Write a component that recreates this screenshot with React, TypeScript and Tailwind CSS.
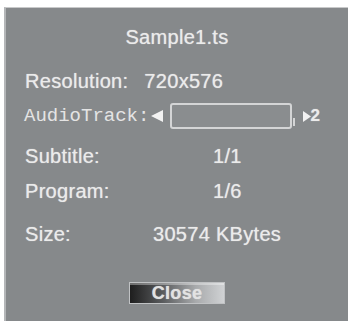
import React from "react";

export default function App() {
  return (
    <div className="w-[348px] h-[321px] bg-white overflow-hidden">
      <div className="ml-[4px] mt-[7px] w-[344px] h-[314px] bg-[#86898b] border-l-2 border-t border-l-[#b4b6b8] border-t-[#c8c9ca] flex flex-col text-[#ebebeb] [font-family:'Liberation_Sans',Arial,sans-serif] text-[20px] leading-[24px] tracking-[0.3px] [text-shadow:0_0_1px_rgba(240,240,240,0.7)]">
        <div className="mt-[17px] h-[24px] text-center">Sample1.ts</div>
        <div className="mt-[20px] h-[24px] pl-[19px] flex">
          <span>Resolution:</span>
          <span className="ml-[16px]">720x576</span>
        </div>
        <div className="mt-[10px] h-[26px] pl-[18px] flex items-center">
          <span className="[font-family:'Liberation_Mono',monospace] text-[19px] leading-[26px] tracking-normal text-[#e4e4e4] [text-shadow:none]">AudioTrack:</span>
          <svg width="14" height="14" viewBox="0 0 14 14" className="ml-[1px]">
            <polygon points="1,7 13,1 13,13" fill="#f2f2f2" />
          </svg>
          <div className="ml-[6px] w-[122px] h-[26px] rounded-[3px] border-2 border-[#d4d5d6] bg-[#8a8d8f]" />
          <div className="ml-[1px] mt-[12px] w-[2px] h-[8px] bg-[#d4d5d6]" />
          <svg width="10" height="13" viewBox="0 0 10 13" className="ml-[7px]">
            <polygon points="1,1 9,6.5 1,12" fill="#f2f2f2" />
          </svg>
          <span className="text-[17px] leading-[20px] font-bold -ml-[2px]">2</span>
        </div>
        <div className="mt-[15px] h-[24px] pl-[19px] flex">
          <span className="w-[188px]">Subtitle:</span>
          <span>1/1</span>
        </div>
        <div className="mt-[11px] h-[24px] pl-[19px] flex">
          <span className="w-[188px]">Program:</span>
          <span>1/6</span>
        </div>
        <div className="mt-[19px] h-[24px] pl-[19px] flex">
          <span className="w-[128px]">Size:</span>
          <span>30574 KBytes</span>
        </div>
        <div className="mt-[36px] flex justify-center">
          <div className="w-[96px] h-[22px] border border-[#c0c2c4] bg-[linear-gradient(to_right,#1e1e1e_0%,#5a5c5e_35%,#a8aaac_70%,#d0d2d4_100%)] shadow-[inset_0_2px_0_rgba(255,255,255,0.35)] flex items-center justify-center text-[18px] leading-[20px] font-bold text-[#e2e2e2]">
            Close
          </div>
        </div>
      </div>
    </div>
  );
}
